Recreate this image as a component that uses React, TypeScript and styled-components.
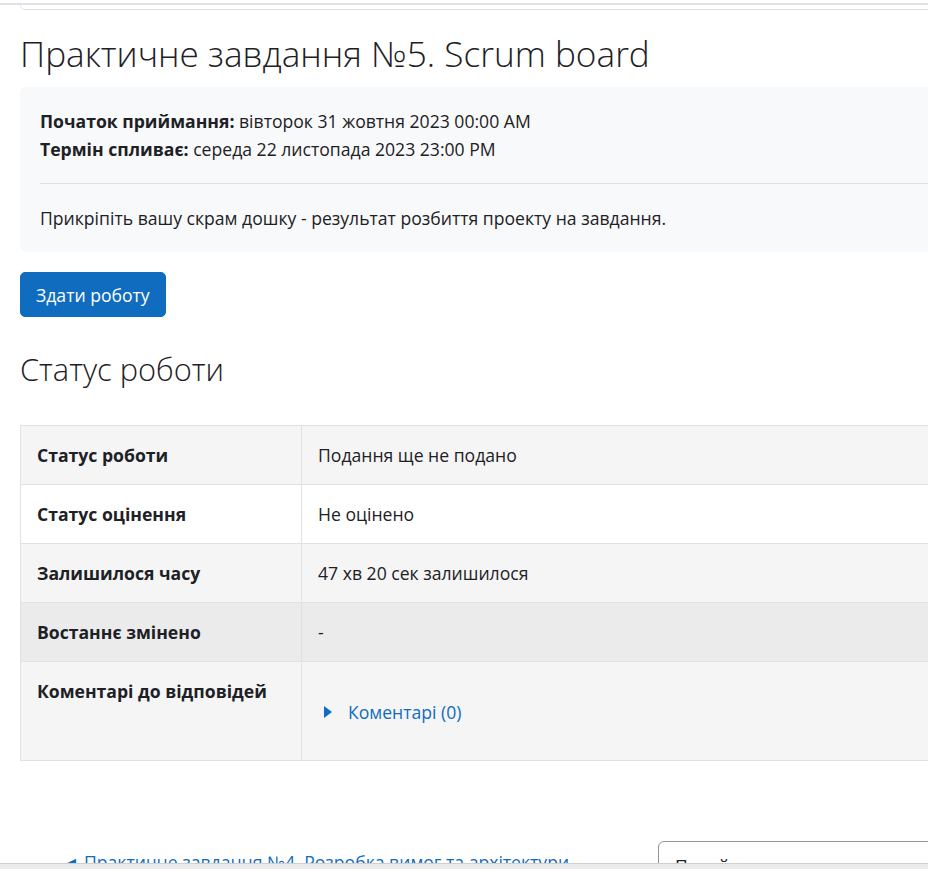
import React from "react";
import styled, { createGlobalStyle } from "styled-components";

const Global = createGlobalStyle`
  html, body { margin: 0; padding: 0; background: #fff; overflow: hidden; }
  body { font-family: "Open Sans", "Noto Sans", sans-serif; color: #1d2125; font-size: 17.6px; line-height: 28px; }
  * { box-sizing: border-box; }
`;

const Page = styled.div`
  width: 1120px;
  padding: 0 0 0 20px;
  position: relative;
`;

const TopRule = styled.div`
  margin: 3px 0 0 -20px;
  height: 2px;
  background: #dee2e6;
`;

const TopCard = styled.div`
  height: 5px;
  border: 1px solid #dee2e6;
  border-top: none;
  border-radius: 0 0 0 6px;
`;

const Title = styled.h2`
  margin: 21px 0 0;
  font-weight: 300;
  font-size: 35.2px;
  line-height: 45px;
`;

const InfoBox = styled.div`
  margin-top: 11px;
  background: #f8f9fa;
  border-radius: 6px;
  padding: 20px;
`;

const DateLine = styled.div`
  strong { font-weight: 700; }
`;

const Divider = styled.hr`
  margin: 20px 0;
  border: 0;
  border-top: 1px solid #dee2e6;
`;

const Desc = styled.p`
  margin: 0;
`;

const SubmitButton = styled.button`
  margin-top: 20px;
  display: inline-block;
  font: inherit;
  color: #fff;
  background: #0f6cbf;
  border: 1px solid #0f6cbf;
  border-radius: 5px;
  padding: 7.5px 15px;
  line-height: 28px;
`;

const SectionTitle = styled.h3`
  margin: 32px 0 0;
  font-weight: 300;
  font-size: 30.8px;
  line-height: 40px;
`;

const Table = styled.div`
  margin-top: 36px;
  display: grid;
  grid-template-columns: 281px 1fr;
  border-top: 1px solid #dee2e6;
  border-left: 1px solid #dee2e6;
`;

const Cell = styled.div<{ $bg: string; $head?: boolean; $tall?: boolean }>`
  background: ${(p) => p.$bg};
  padding: 15px 16px;
  border-right: 1px solid #dee2e6;
  border-bottom: 1px solid #dee2e6;
  font-weight: ${(p) => (p.$head ? 700 : 400)};
  min-height: ${(p) => (p.$tall ? "99px" : "59px")};
`;

const CommentToggle = styled.a`
  display: flex;
  align-items: center;
  gap: 16px;
  margin: 21px 0 19px 6px;
  color: #0f6cbf;
  text-decoration: none;
`;

const Footer = styled.div`
  margin-top: 80px;
  display: flex;
  align-items: flex-start;
`;

const PrevLink = styled.a`
  margin: 7px 0 0 42px;
  color: #0f6cbf;
  text-decoration: underline;
  width: 596px;
  white-space: nowrap;
`;

const JumpSelect = styled.div`
  width: 360px;
  height: 48px;
  border: 1px solid #8f959e;
  border-radius: 6px;
  padding: 10px 16px;
  color: #1d2125;
`;

const ScrollBar = styled.div`
  position: fixed;
  left: 0;
  right: 0;
  bottom: 0;
  height: 6px;
  background: #ebebeb;
  border-top: 1px solid #cfcfcf;
`;

const rows: { label: string; value: React.ReactNode; bg: string }[] = [
  { label: "Статус роботи", value: "Подання ще не подано", bg: "#f5f5f5" },
  { label: "Статус оцінення", value: "Не оцінено", bg: "#ffffff" },
  { label: "Залишилося часу", value: "47 хв 20 сек залишилося", bg: "#f5f5f5" },
  { label: "Востаннє змінено", value: "-", bg: "#ebebeb" },
];

export default function App() {
  return (
    <>
      <Global />
      <Page>
        <TopRule />
        <TopCard />
        <Title>Практичне завдання №5. Scrum board</Title>
        <InfoBox>
          <DateLine>
            <strong>Початок приймання:</strong> вівторок 31 жовтня 2023 00:00 AM
          </DateLine>
          <DateLine>
            <strong>Термін спливає:</strong> середа 22 листопада 2023 23:00 PM
          </DateLine>
          <Divider />
          <Desc>Прикріпіть вашу скрам дошку - результат розбиття проекту на завдання.</Desc>
        </InfoBox>
        <SubmitButton>Здати роботу</SubmitButton>
        <SectionTitle>Статус роботи</SectionTitle>
        <Table>
          {rows.map((r) => (
            <React.Fragment key={r.label}>
              <Cell $bg={r.bg} $head>{r.label}</Cell>
              <Cell $bg={r.bg}>{r.value}</Cell>
            </React.Fragment>
          ))}
          <Cell $bg="#f5f5f5" $head $tall>Коментарі до відповідей</Cell>
          <Cell $bg="#f5f5f5" $tall>
            <CommentToggle href="#">
              <svg width="8" height="12" viewBox="0 0 8 12">
                <path d="M0 0 L8 6 L0 12 Z" fill="#0f6cbf" />
              </svg>
              Коментарі (0)
            </CommentToggle>
          </Cell>
        </Table>
        <Footer>
          <PrevLink href="#">◄ Практичне завдання №4. Розробка вимог та архітектури</PrevLink>
          <JumpSelect>Перейти до...</JumpSelect>
        </Footer>
      </Page>
      <ScrollBar />
    </>
  );
}
